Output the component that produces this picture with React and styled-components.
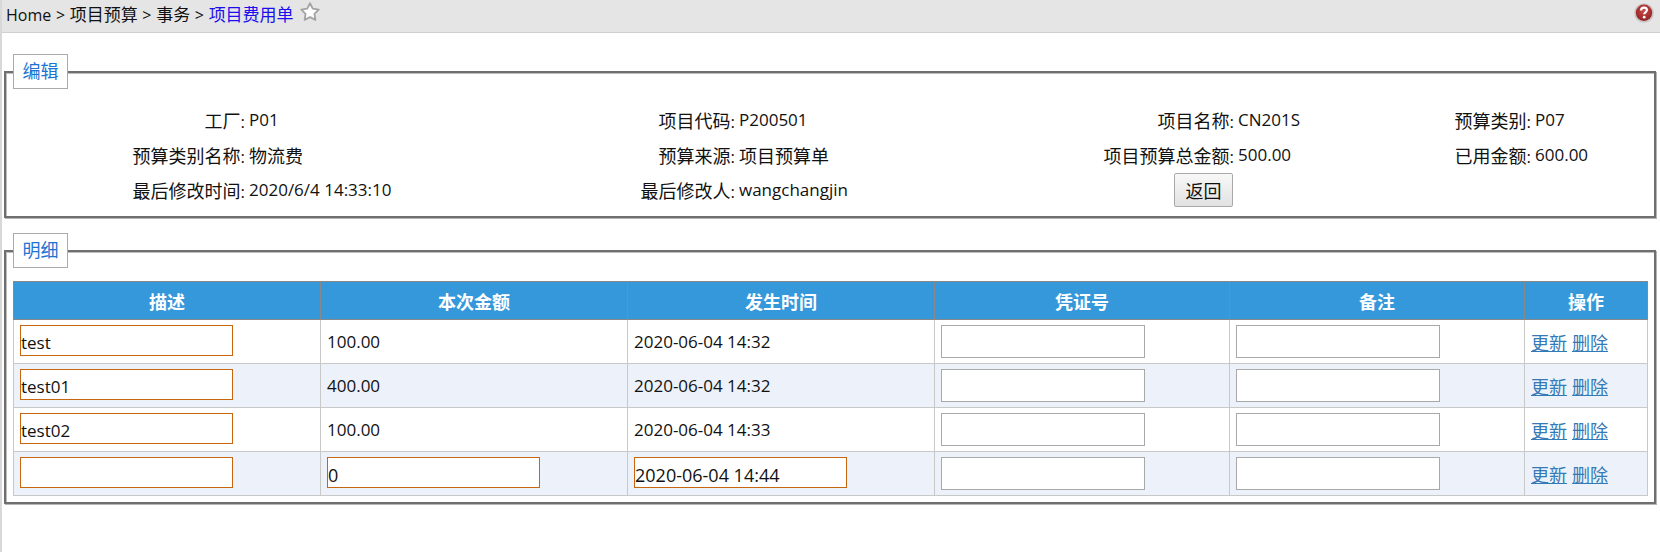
import React from 'react';
import styled, { createGlobalStyle } from 'styled-components';

const GlobalStyle = createGlobalStyle`
  html, body {
    margin: 0;
    padding: 0;
    background: #fff;
  }
  body {
    font-family: "Open Sans", "Noto Sans CJK SC", sans-serif;
    font-size: 17px;
    color: #111;
  }
`;

const Page = styled.div`
  min-height: 552px;
  box-sizing: border-box;
  border-left: 2px solid #d8d8d8;
`;

const TopBar = styled.div`
  display: flex;
  align-items: flex-start;
  justify-content: space-between;
  height: 33px;
  box-sizing: border-box;
  padding: 2px 4px 0 4px;
  background: #e5e5e5;
  border-bottom: 1px solid #cfcfcf;
`;

const Crumbs = styled.div`
  display: flex;
  align-items: flex-start;
  font-size: 16px;
  line-height: 26px;
  word-spacing: 0.5px;
  white-space: pre;
`;

const CurrentCrumb = styled.span`
  color: #1a0dee;
`;

const Han = styled.span`
  font-size: ${props => props.$size || 18}px;
`;

const Star = styled.svg`
  width: 20px;
  height: 20px;
  margin-left: 6px;
`;

const Help = styled.svg`
  width: 20px;
  height: 20px;
  margin: 1px 2px 0 0;
`;

const Main = styled.div`
  padding: 21px 4px 0 2px;
`;

const Group = styled.fieldset`
  margin: 0 0 15px;
  padding: 0 7px ${props => props.$bottom}px;
  border: 2px solid #6f6f6f;
  box-shadow: inset 1px 1px 0 #bdbdbd, 1px 1px 0 #b5b5b5;
  min-width: 0;
`;

const GroupTitle = styled.legend`
  box-sizing: border-box;
  width: 55px;
  height: 35px;
  padding: 0;
  margin: 0 auto 0 0;
  border: 1px solid #aaa;
  background: #fff;
  color: #1e73d2;
  font-size: 18px;
  text-align: center;
  line-height: 32px;
`;

const InfoGrid = styled.div`
  display: grid;
  grid-template-columns: 239px 250px 240px 250px 249px 148px 149px 1fr;
  grid-auto-rows: 35px;
  align-items: center;
  padding-top: 13px;
  margin-left: -7px;
`;

const InfoLabel = styled.div`
  text-align: right;
  white-space: nowrap;
`;

const InfoValue = styled.div`
  padding-left: 4px;
  white-space: nowrap;
`;

const BackCell = styled.div`
  grid-column: span 2;
  padding-left: 189px;
`;

const BackButton = styled.button`
  display: block;
  width: 59px;
  height: 34px;
  padding: 0;
  border: 1px solid #a9a9a9;
  border-radius: 2px;
  background: linear-gradient(#f8f8f8, #e2e2e2);
  font-family: inherit;
  font-size: 18px;
  color: #111;
`;

const Table = styled.table`
  width: 1634px;
  margin-top: 13px;
  table-layout: fixed;
  border-collapse: collapse;
`;

const HeadCell = styled.th`
  height: 37px;
  padding: 0;
  background: #3498db;
  border: 1px solid #888;
  color: #fff;
  font-weight: 700;
  text-align: center;
`;

const Row = styled.tr`
  background: ${props => (props.$alt ? '#edf2fa' : '#fff')};
`;

const Cell = styled.td`
  height: 44px;
  box-sizing: border-box;
  padding: 0 6px;
  border: 1px solid #c8c8c8;
`;

const Field = styled.input`
  display: block;
  box-sizing: border-box;
  padding: 4px 0 0;
  background: #fff;
  font-family: inherit;
  font-size: ${props => (props.$large ? '18px' : '17px')};
  color: #111;
  outline: 0;
  width: ${props => (props.$required ? '213px' : '204px')};
  height: ${props => (props.$required ? '31px' : '33px')};
  margin: ${props => (props.$required ? '0 0 2px' : '0')};
  border: 1px solid ${props => (props.$required ? '#c8660f' : '#a9a9a9')};
`;

const ActionLink = styled.a`
  color: #337ab7;
  text-decoration: underline;
  margin-right: 5px;
`;

// the original mixes a Latin face with a larger-looking CJK face
function Mixed({ text, size }) {
  return text.split(/([\u4e00-\u9fff]+)/).map((part, i) =>
    i % 2 === 1 ? (
      <Han key={i} $size={size}>
        {part}
      </Han>
    ) : (
      part
    )
  );
}

const COLUMNS = [
  { title: '描述', width: 307 },
  { title: '本次金额', width: 307 },
  { title: '发生时间', width: 307 },
  { title: '凭证号', width: 295 },
  { title: '备注', width: 295 },
  { title: '操作', width: 123 },
];

const INFO = [
  ['工厂', 'P01'],
  ['项目代码', 'P200501'],
  ['项目名称', 'CN201S'],
  ['预算类别', 'P07'],
  ['预算类别名称', '物流费'],
  ['预算来源', '项目预算单'],
  ['项目预算总金额', '500.00'],
  ['已用金额', '600.00'],
  ['最后修改时间', '2020/6/4 14:33:10'],
  ['最后修改人', 'wangchangjin'],
];

const DETAILS = [
  { desc: 'test', amount: '100.00', time: '2020-06-04 14:32' },
  { desc: 'test01', amount: '400.00', time: '2020-06-04 14:32' },
  { desc: 'test02', amount: '100.00', time: '2020-06-04 14:33' },
  { desc: '', amount: '0', time: '2020-06-04 14:44', editable: true },
];

function App() {
  return (
    <Page>
      <GlobalStyle />
      <TopBar>
        <Crumbs>
          Home &gt; <Han $size={17}>项目预算</Han> &gt; <Han $size={17}>事务</Han> &gt;{' '}
          <CurrentCrumb>
            <Han $size={17}>项目费用单</Han>
          </CurrentCrumb>
          <Star viewBox="0 0 24 24">
            <path
              d="M12 1.5L15.29 7.97 22.46 9.1 17.33 14.23 18.47 21.4 12 18.1 5.53 21.4 6.67 14.23 1.54 9.1 8.71 7.97Z"
              fill="#fdfdfd"
              stroke="#a3a3a3"
              strokeWidth="2.2"
              strokeLinejoin="round"
            />
          </Star>
        </Crumbs>
        <Help viewBox="0 0 20 20">
          <defs>
            <radialGradient id="helpRed" cx="50%" cy="35%" r="70%">
              <stop offset="0%" stopColor="#cf4a4a" />
              <stop offset="100%" stopColor="#8c1f1f" />
            </radialGradient>
          </defs>
          <circle cx="10" cy="10" r="9.8" fill="#c6c6c6" />
          <circle cx="10" cy="9.8" r="8.2" fill="url(#helpRed)" />
          <path
            d="M7 7.6c0-1.8 1.3-2.9 3.1-2.9s2.8 1 2.8 2.4c0 2.2-2.7 2.2-2.7 4.2"
            fill="none"
            stroke="#fff"
            strokeWidth="2.2"
          />
          <circle cx="10.2" cy="14.2" r="1.4" fill="#fff" />
        </Help>
      </TopBar>
      <Main>
        <Group $bottom={9}>
          <GroupTitle>编辑</GroupTitle>
          <InfoGrid>
            {INFO.map(([label, value]) => (
              <React.Fragment key={label}>
                <InfoLabel>
                  <Han>{label}</Han>:
                </InfoLabel>
                <InfoValue>
                  <Mixed text={value} />
                </InfoValue>
              </React.Fragment>
            ))}
            <BackCell>
              <BackButton type="button">返回</BackButton>
            </BackCell>
          </InfoGrid>
        </Group>
        <Group $bottom={6}>
          <GroupTitle>明细</GroupTitle>
          <Table>
            <colgroup>
              {COLUMNS.map(col => (
                <col key={col.title} style={{ width: col.width }} />
              ))}
            </colgroup>
            <thead>
              <tr>
                {COLUMNS.map(col => (
                  <HeadCell key={col.title}>
                    <Han>{col.title}</Han>
                  </HeadCell>
                ))}
              </tr>
            </thead>
            <tbody>
              {DETAILS.map((row, i) => (
                <Row key={i} $alt={i % 2 === 1}>
                  <Cell>
                    <Field $required defaultValue={row.desc} />
                  </Cell>
                  <Cell>{row.editable ? <Field $required $large defaultValue={row.amount} /> : row.amount}</Cell>
                  <Cell>{row.editable ? <Field $required $large defaultValue={row.time} /> : row.time}</Cell>
                  <Cell>
                    <Field />
                  </Cell>
                  <Cell>
                    <Field />
                  </Cell>
                  <Cell>
                    <ActionLink href="#">
                      <Han>更新</Han>
                    </ActionLink>
                    <ActionLink href="#">
                      <Han>删除</Han>
                    </ActionLink>
                  </Cell>
                </Row>
              ))}
            </tbody>
          </Table>
        </Group>
      </Main>
    </Page>
  );
}

export default App;
